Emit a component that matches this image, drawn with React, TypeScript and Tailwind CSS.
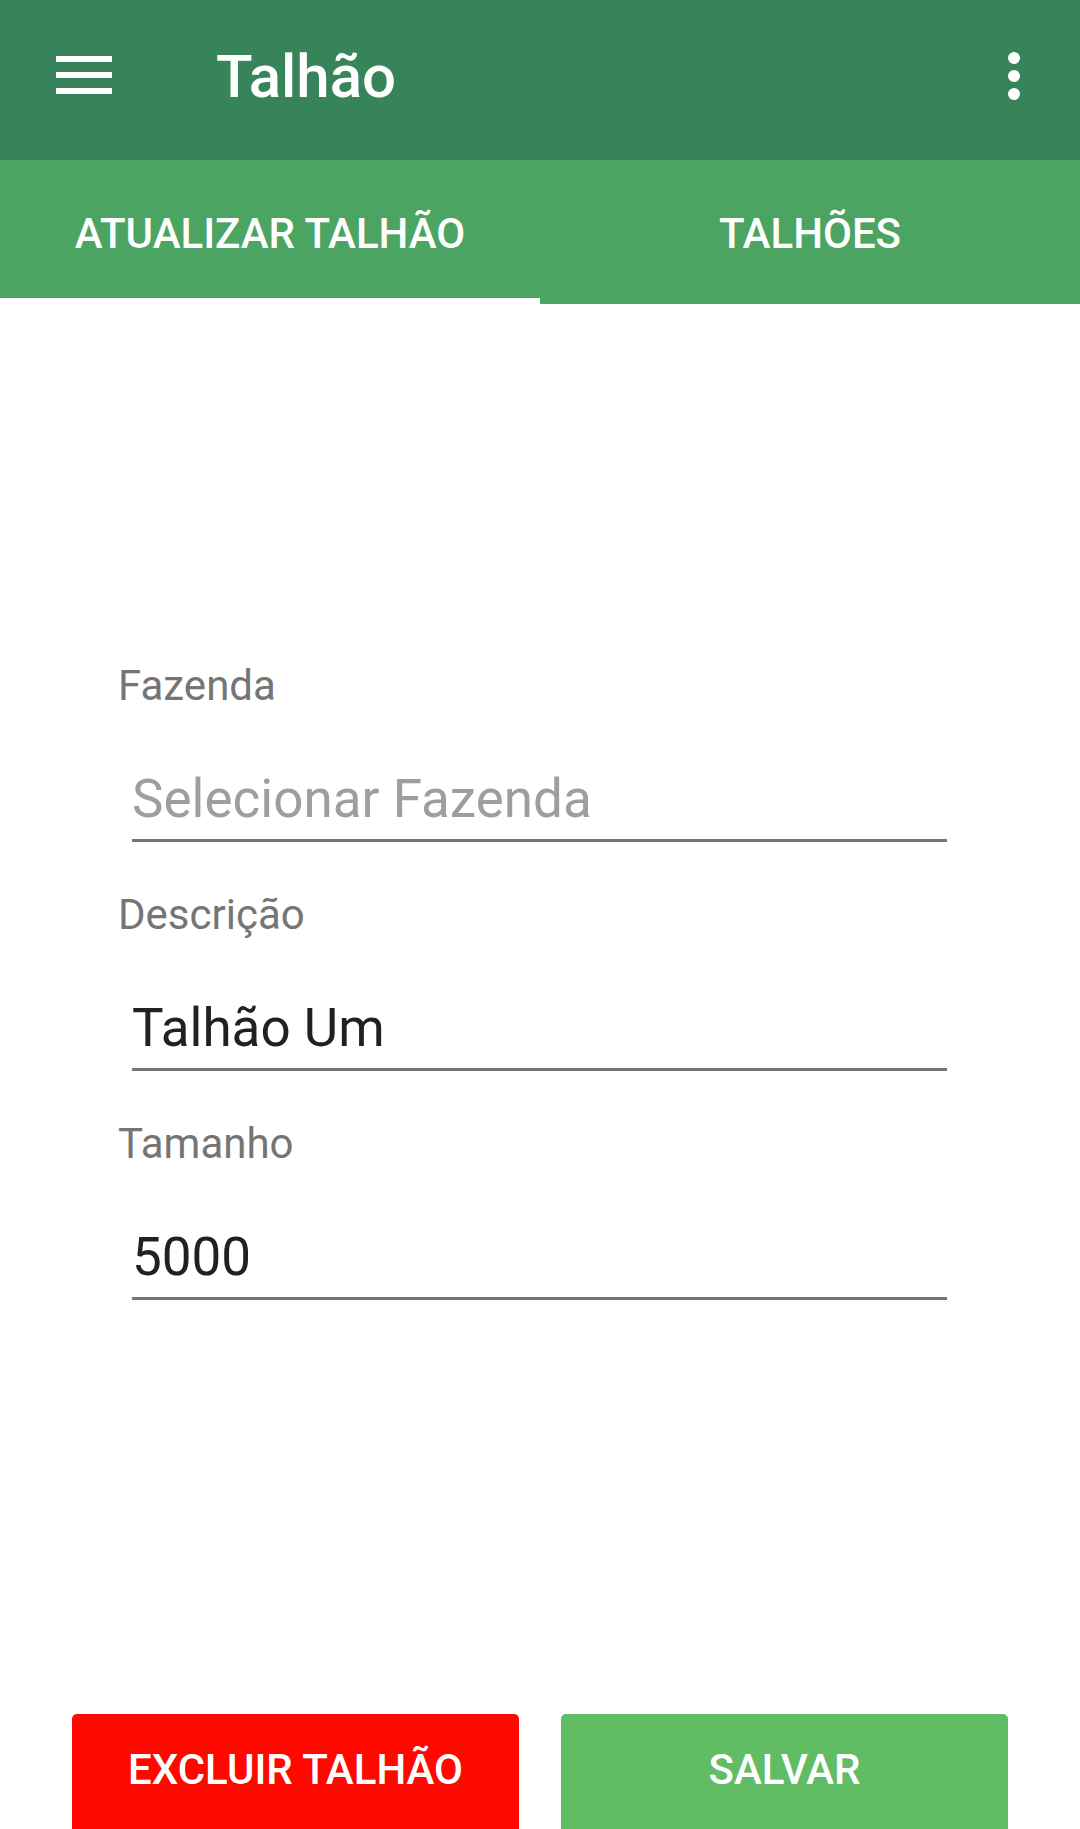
import React from 'react';

const fields = [
    { label: 'Fazenda', value: 'Selecionar Fazenda', placeholder: true },
    { label: 'Descrição', value: 'Talhão Um', placeholder: false },
    { label: 'Tamanho', value: '5000', placeholder: false },
];

const App = () => {
    return (
        <div className="w-[1080px] h-[1829px] overflow-hidden bg-white flex flex-col font-['Roboto',sans-serif]">
            {/* Toolbar */}
            <div className="h-[160px] bg-[#37845a] flex items-start shrink-0">
                <div className="ml-[56px] mt-[56px] w-[56px] flex flex-col gap-[10px]">
                    <div className="h-[6px] bg-white"></div>
                    <div className="h-[6px] bg-white"></div>
                    <div className="h-[6px] bg-white"></div>
                </div>
                <h1 className="ml-[104px] mt-[42px] text-[60px] leading-[70px] font-medium text-white">Talhão</h1>
                <div className="ml-auto mr-[60px] mt-[52px] flex flex-col gap-[6px]">
                    <div className="w-[12px] h-[12px] rounded-full bg-white"></div>
                    <div className="w-[12px] h-[12px] rounded-full bg-white"></div>
                    <div className="w-[12px] h-[12px] rounded-full bg-white"></div>
                </div>
            </div>

            {/* Tabs */}
            <div className="h-[144px] bg-[#4ba462] flex shrink-0">
                <div className="flex-1 flex flex-col">
                    <div className="flex-1 flex justify-center pt-[49px]">
                        <span className="text-[42px] leading-[50px] font-medium text-white">ATUALIZAR TALHÃO</span>
                    </div>
                    <div className="h-[6px] bg-white"></div>
                </div>
                <div className="flex-1 flex justify-center pt-[49px]">
                    <span className="text-[42px] leading-[50px] font-medium text-white">TALHÕES</span>
                </div>
            </div>

            {/* Form */}
            <div className="flex-1 flex flex-col pt-[357px] pl-[118px] pr-[133px]">
                {fields.map((field, index) => (
                    <div key={field.label} className={index > 0 ? 'mt-[48px]' : ''}>
                        <div className="h-[50px] text-[42px] leading-[50px] text-[#757575]">{field.label}</div>
                        <div className="mt-[62px] ml-[14px] h-[69px] pb-[14px] border-b-[3px] border-[#757575]">
                            <span className={`block text-[53px] leading-[52px] ${field.placeholder ? 'text-[#9e9e9e]' : 'text-[#212121]'}`}>
                                {field.value}
                            </span>
                        </div>
                    </div>
                ))}
            </div>

            {/* Buttons */}
            <div className="h-[115px] flex gap-[42px] px-[72px] shrink-0">
                <button className="flex-1 rounded-t-[5px] bg-[#ff0800] flex justify-center pt-[31px]">
                    <span className="text-[42px] leading-[50px] font-medium text-white">EXCLUIR TALHÃO</span>
                </button>
                <button className="flex-1 rounded-t-[5px] bg-[#61bd63] flex justify-center pt-[31px]">
                    <span className="text-[42px] leading-[50px] font-medium text-white">SALVAR</span>
                </button>
            </div>
        </div>
    );
};

export default App;
